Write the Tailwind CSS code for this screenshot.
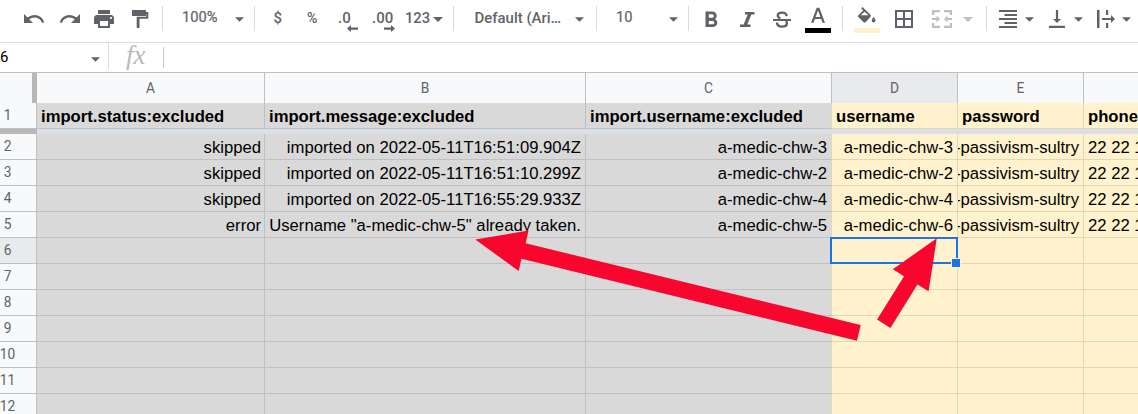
<!DOCTYPE html>
<html lang="en">
<head>
<meta charset="utf-8">
<title>Spreadsheet</title>
<script src="https://cdn.jsdelivr.net/npm/@tailwindcss/browser@4"></script>
</head>
<body class="relative h-[414px] w-[1138px] overflow-hidden bg-white font-['Roboto',sans-serif]">
<svg class="hidden"><symbol id="caret" viewBox="0 0 10 5"><path d="M0 0h10L5 5z" fill="currentColor"/></symbol></svg>

<!-- Toolbar -->
<div class="h-[43px] border-b border-[#dadce0] text-[#5f6368]">
  <div class="flex h-[37px] items-center text-[15px] font-medium leading-[18px] whitespace-nowrap">
    <svg class="ml-[22px] size-6 shrink-0" viewBox="0 0 24 24" fill="currentColor"><path d="M12.5 8c-2.65 0-5.05.99-6.9 2.6L2 7v9h9l-3.62-3.62c1.39-1.16 3.16-1.88 5.12-1.88 3.54 0 6.55 2.31 7.6 5.5l2.1-.78C20.9 11.03 17.15 8 12.5 8z"/></svg>
    <svg class="ml-[12px] size-6 shrink-0" viewBox="0 0 24 24" fill="currentColor"><path d="M18.4 10.6C16.55 8.99 14.15 8 11.5 8c-4.65 0-8.4 3.03-9.7 7.22l2.1.78c1.05-3.19 4.05-5.5 7.6-5.5 1.95 0 3.73.72 5.12 1.88L13 16h9V7l-3.6 3.6z"/></svg>
    <svg class="ml-[10px] size-6 shrink-0" viewBox="0 0 24 24" fill="currentColor"><path d="M19 8H5c-1.66 0-3 1.34-3 3v6h4v4h12v-4h4v-6c0-1.66-1.34-3-3-3zm-3 11H8v-5h8v5zm3-7c-.55 0-1-.45-1-1s.45-1 1-1 1 .45 1 1-.45 1-1 1zM18 3H6v4h12V3z"/></svg>
    <svg class="ml-[12px] size-6 shrink-0" viewBox="0 0 24 24" fill="currentColor"><path d="M4.600 3h12.800q.6 0 .6.6V5h2.300v6.700H11.500V21H8.700V9.800h9.600V7H18v1.400q0 .6-.6.6H4.600q-.6 0-.6-.6V3.600q0-.6.6-.6z"/></svg>
    <div class="ml-[10px] h-[25px] w-px shrink-0 bg-[#dadce0]"></div>
    <div class="flex w-[91px] shrink-0 items-center pl-[19px]"><span class="-mt-[3px] w-[53px] text-[14.7px] font-normal [-webkit-text-stroke:0.2px_#5f6368]">100%</span><svg class="mt-px h-[5px] w-[9px]"><use href="#caret"/></svg></div>
    <div class="h-[25px] w-px shrink-0 bg-[#dadce0]"></div>
    <span class="-mt-[2px] ml-[18.5px] w-[33.5px] shrink-0">$</span>
    <span class="-mt-[2px] w-[31px] shrink-0 text-[14px]">%</span>
    <div class="relative -mt-[2px] w-[34px] shrink-0">.0<svg class="absolute top-[16px] left-[9px] h-[7px] w-[11px]" viewBox="0 0 11 7" fill="currentColor"><path d="M0 3.500 4 0v2.400h7v2.400H4V7z"/></svg></div>
    <div class="relative -mt-[2px] w-[33px] shrink-0">.00<svg class="absolute top-[16px] left-[12px] h-[7px] w-[11px]" viewBox="0 0 11 7" fill="currentColor"><path d="M11 3.500 7 0v2.400H0v2.400h7V7z"/></svg></div>
    <span class="-mt-[2px] w-[28px] shrink-0 text-[14.7px]">123</span><svg class="mt-[1px] h-[5px] w-[10px] shrink-0"><use href="#caret"/></svg>
    <div class="ml-[10px] h-[25px] w-px shrink-0 bg-[#dadce0]"></div>
    <div class="flex w-[142px] shrink-0 items-center pl-[20.5px]"><span class="-mt-[2px] w-[100px] text-[14.95px]">Default (Ari…</span><svg class="mt-px h-[5px] w-[9px]"><use href="#caret"/></svg></div>
    <div class="h-[25px] w-px shrink-0 bg-[#dadce0]"></div>
    <div class="flex w-[91px] shrink-0 items-center pl-[19px]"><span class="-mt-[3px] w-[53px] text-[14.7px] font-normal [-webkit-text-stroke:0.2px_#5f6368]">10</span><svg class="mt-px h-[5px] w-[9px]"><use href="#caret"/></svg></div>
    <div class="h-[25px] w-px shrink-0 bg-[#dadce0]"></div>
    <!-- bold, italic, strikethrough -->
    <svg class="ml-[11px] size-6 shrink-0" viewBox="0 0 24 24" fill="currentColor"><path transform="translate(-2.200 .2) scale(1.1)" d="M15.600 10.790c.97-.67 1.650-1.770 1.650-2.790 0-2.260-1.750-4-4-4H7v14h7.040c2.090 0 3.710-1.700 3.710-3.790 0-1.520-.86-2.820-2.150-3.420zM10 6.500h3c.83 0 1.500.67 1.500 1.500s-.67 1.500-1.500 1.500h-3v-3zm3.500 9H10v-3h3.500c.83 0 1.500.67 1.500 1.500s-.67 1.500-1.500 1.500z"/></svg>
    <svg class="ml-[11px] size-6 shrink-0" viewBox="0 0 24 24" fill="currentColor"><path d="M10 5h9.500v2.600h-3.100l-4.100 9.800h3.200V20H5v-2.600h3.600l4.100-9.800H10z"/></svg>
    <svg class="ml-[11px] size-6 shrink-0" viewBox="0 0 24 24" fill="none" stroke="currentColor" stroke-width="2.400"><path d="M3 13h18" stroke-width="2"/><path d="M16.700 9.200C16.500 6.600 14.600 5.600 12.200 5.600c-2.700 0-4.400 1.200-4.400 3 0 1.400.8 2.200 2.500 2.800M7 15.500c.1 2.800 2.200 4.100 5.100 4.100 2.800 0 4.800-1.100 4.800-3.300 0-.9-.3-1.600-.9-2.200"/></svg>
    <!-- text colour -->
    <svg class="ml-[11px] mt-[3px] h-[26px] w-[26px] shrink-0" viewBox="0 0 26 26"><path d="M11.700.800h2.700L20 15.800h-2.500l-1.300-3.700H9.900l-1.300 3.700H6.100zM10.600 10h4.800L13 3.500z" fill="currentColor"/><path d="M0 21h26v5H0z" fill="#000"/></svg>
    <div class="ml-[11px] h-[25px] w-px shrink-0 bg-[#dadce0]"></div>
    <!-- fill colour -->
    <svg class="ml-[11px] mt-[3px] h-[26px] w-[26px] shrink-0" viewBox="0 0 26 26"><g fill="currentColor"><path d="M16.300 7.500 8.500 0 7.100 1.300 9.200 3.400 4.100 8.400q-.7.7 0 1.400l5.500 5.400q1 .8 2 0l4.700-5.100q1.200-1.300 0-2.600zM6.700 8.200l3.900-3.400 3.900 3.400z"/><path d="M19.600 10s-1.900 2.200-1.900 3.500a1.900 1.900 0 0 0 3.800 0c0-1.300-1.900-3.500-1.900-3.500z"/></g><path d="M0 21h26v5H0z" fill="#fff2cc"/></svg>
    <svg class="ml-[12px] size-6 shrink-0" viewBox="0 0 24 24" fill="currentColor"><path d="M3 3v18h18V3H3zm8 16H5v-6h6v6zm0-8H5V5h6v6zm8 8h-6v-6h6v6zm0-8h-6V5h6v6z"/></svg>
    <svg class="ml-[14px] size-6 shrink-0 text-[#bdc0c3]" viewBox="0 0 24 24" fill="currentColor"><path d="M2 3h8v2.300H4.300V8H2zM14 3h8v5h-2.300V5.300H14zM2 16h2.300v2.700H10V21H2zM19.700 16H22v5h-8v-2.300h5.700zM2 11h4.500V8.500L10 12l-3.500 3.500V13H2zM22 11h-4.500V8.500L14 12l3.500 3.500V13H22z"/></svg>
    <svg class="ml-[9px] mt-px h-[5px] w-[10px] shrink-0 text-[#bdc0c3]"><use href="#caret"/></svg>
    <div class="ml-[13px] h-[25px] w-px shrink-0 bg-[#dadce0]"></div>
    <svg class="ml-[9px] size-6 shrink-0" viewBox="0 0 24 24" fill="currentColor"><path d="M3 3h18v2H3zM8.500 7h12.500v2H8.500zM3 11h18v2H3zM8.500 15h12.500v2H8.500zM3 19h18v2H3z"/></svg>
    <svg class="ml-[5px] mt-px h-[5px] w-[9px] shrink-0"><use href="#caret"/></svg>
    <svg class="ml-[11px] size-6 shrink-0" viewBox="0 0 24 24" fill="currentColor"><path d="M16 12h-2.900V3h-2.200v9H8l4 4zM4 18.800V21h16v-2.200z"/></svg>
    <svg class="ml-[5px] mt-px h-[5px] w-[9px] shrink-0"><use href="#caret"/></svg>
    <svg class="ml-[11px] size-6 shrink-0" viewBox="0 0 24 24" fill="currentColor"><path d="M3 3h2.500v18H3zM12 3h2.200v5H12zM12 16h2.200v5H12zM8 11h9V8l4 4-4 4v-3H8z"/></svg>
    <svg class="ml-[4px] mt-px h-[5px] w-[9px] shrink-0"><use href="#caret"/></svg>
  </div>
</div>

<!-- Name box and formula bar -->
<div class="flex h-[30px] items-start border-b border-[#c0c0c0]">
  <div class="flex h-[26px] w-[109px] items-center border-r border-[#dadce0] text-[15px] text-black"><span class="mt-[3px] w-[91px]">6</span><svg class="mt-[7px] h-[5px] w-[9px] text-[#5f6368]"><use href="#caret"/></svg></div>
  <div class="w-[54px] pl-[17px] font-['Liberation_Serif',serif] text-[27px] leading-[25px] text-[#b9bbbd] italic">fx</div>
  <div class="mt-[4px] h-[21px] w-px bg-[#c8c8c8]"></div>
</div>

<!-- Sheet -->
<div id="sheet"></div>

<!-- Selected cell -->
<div class="absolute top-[237px] left-[830px] h-[27px] w-[128px] border-2 border-[#1a73e8]"></div>
<div class="absolute top-[258px] left-[951px] size-[10px] border border-[#fff2cc] bg-[#1a73e8]"></div>

<!-- Annotation arrows -->
<svg class="pointer-events-none absolute inset-0" width="1138" height="414" fill="#f9062f">
  <path d="M475.300 239.500 528.500 230.500 525.700 243.300 860.700 325 857 340.700 521.500 258.700 518.700 271z"/>
  <path d="M936.800 238.200 928.600 291.300 917.400 284.500 890.400 328 877.100 319.400 904 276.300 892.800 269.300z"/>
</svg>

<script>
const cols = "grid grid-cols-[37px_228px_321px_246px_126px_126px_55px]";
const pw = '<span class="absolute right-[4px] bottom-[2px]">-passivism-sultry</span>';
const data = [
  ["import.status:excluded", "import.message:excluded", "import.username:excluded", "username", "password", "phone"],
  ["skipped", "imported on 2022-05-11T16:51:09.904Z", "a-medic-chw-3", "a-medic-chw-3", pw, "22 22 1"],
  ["skipped", "imported on 2022-05-11T16:51:10.299Z", "a-medic-chw-2", "a-medic-chw-2", pw, "22 22 1"],
  ["skipped", "imported on 2022-05-11T16:55:29.933Z", "a-medic-chw-4", "a-medic-chw-4", pw, "22 22 1"],
  ["error", 'Username "a-medic-chw-5" already taken.', "a-medic-chw-5", "a-medic-chw-6", pw, "22 22 1"],
];
let html = `<div class="${cols} h-[30px] text-center text-[13.75px] leading-[30px] text-[#5f6368]"><div class="border-r-[5px] border-b border-r-[#b7b7b7] border-b-[#c0c0c0] bg-[#f8f9fa]"></div>`;
["A", "B", "C", "D", "E", ""].forEach(c => {
  html += `<div class="border-r border-b border-[#c0c0c0] ${c === "D" ? "bg-[#e8eaed]" : "bg-[#f8f9fa]"}">${c}</div>`;
});
html += "</div>";
for (let r = 1; r <= 12; r++) {
  html += `<div class="${cols} h-[26px]"><div class="border-r border-b border-[#c0c0c0] text-[13.75px] leading-[24px] text-[#5f6368] ${r === 6 ? "bg-[#e8eaed]" : "bg-[#f8f9fa]"}"><div class="flex w-[15px] justify-center">${r}</div></div>`;
  for (let c = 0; c < 6; c++) {
    const tone = c < 3 ? "bg-[#d9d9d9] border-b-[#c0c0c0]" : "bg-[#fff2cc] border-b-[#e3d7b5]";
    const edge = c < 2 ? "border-r-[#c0c0c0]" : "border-r-[#e3d7b5]";
    const pad = c === 0 ? "pr-[3px] pl-[4px]" : "px-[4px]";
    const align = r === 1 ? "justify-start font-bold" : c === 5 ? "justify-start" : "justify-end";
    html += `<div class="relative flex items-end overflow-hidden border-r border-b pb-[2px] font-['Liberation_Sans',sans-serif] text-[16.67px] leading-[18px] whitespace-nowrap text-black ${pad} ${tone} ${edge} ${align}">${(data[r - 1] || [])[c] || ""}</div>`;
  }
  html += "</div>";
  if (r === 1) html += '<div class="flex h-[5px]"><div class="w-[37px] bg-[#b7b7b7]"></div><div class="flex-1 bg-[#dadfe8]"></div></div>';
}
document.getElementById("sheet").innerHTML = html;
</script>
</body>
</html>
